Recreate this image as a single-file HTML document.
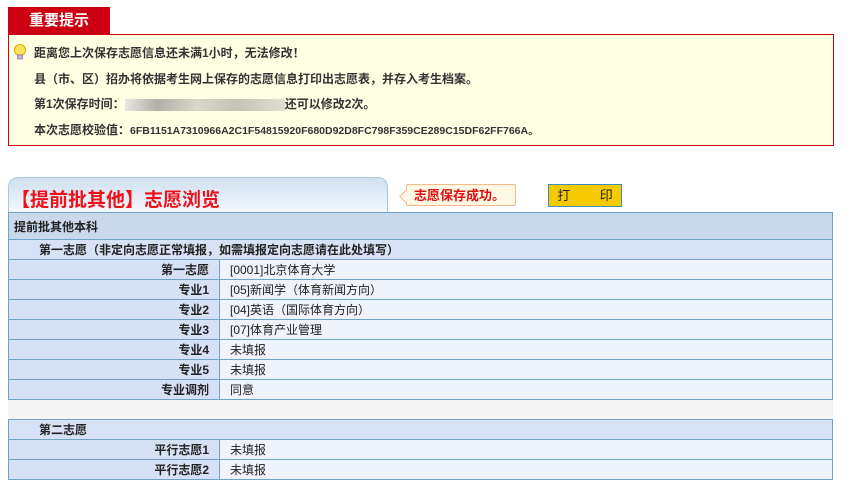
<!DOCTYPE html>
<html><head><meta charset="utf-8"><style>
body{margin:0;width:850px;height:476px;overflow:hidden;background:#fff;font-family:"Liberation Sans","Noto Sans CJK SC",sans-serif;font-size:12px;color:#222;position:relative}
.a{position:absolute}
.tab{left:8px;top:7px;width:102px;height:27px;background:#cc0012;color:#fff;font-weight:bold;font-size:15px;line-height:27px;text-align:center}
.box{left:8px;top:34px;width:824px;height:110px;border:1px solid #cc0012;background:#ffffe3}
.box div{position:absolute;left:25px;font-weight:bold;font-size:12px;color:#333}
.hdr{left:8px;top:177px;width:380px;height:35px;border:1px solid #a9c6de;border-bottom:none;border-radius:10px 10px 0 0;background:linear-gradient(#cfe0ef,#f3f8fc);box-sizing:border-box}
.hdr span{position:absolute;left:2px;top:7px;color:#f0101a;font-weight:bold;font-size:19px;white-space:nowrap}
.bub{left:406px;top:184px;width:110px;height:22px;border:1px solid #f6b98a;background:#fff8e4;border-radius:2px;color:#e01010;font-weight:bold;font-size:13px;line-height:22px;padding-left:7px;box-sizing:border-box}
.bub:before{content:"";position:absolute;left:-6px;top:7px;width:8px;height:8px;background:#fff8e4;border-left:1px solid #f6b98a;border-bottom:1px solid #f6b98a;transform:rotate(45deg)}
.btn{left:548px;top:184px;width:74px;height:23px;background:#f5cb00;border:1px solid #3d8dc1;box-sizing:border-box;font-size:13px;line-height:21px;text-align:center;word-spacing:26px}
table{position:absolute;left:8px;border-collapse:collapse;width:825px}
td{border:1px solid #6fa2c7;height:19px;padding:0;font-size:12px}
td.l{width:211px;background:#d6e1f5;text-align:right;font-weight:bold;padding-right:10px;box-sizing:border-box}
td.v{background:#eef3fc;padding-left:10px}
.sec{background:#d8e2f6;font-weight:bold;padding-left:30px}
</style></head><body>
<div class="a tab">重要提示</div>
<div class="a box">
<svg style="position:absolute;left:4px;top:9px" width="14" height="17" viewBox="0 0 14 17"><circle cx="7" cy="6" r="5.5" fill="#ffe060" stroke="#e0a800"/><rect x="4.5" y="11" width="5" height="4" fill="#c8b0e0" stroke="#8a70a8" stroke-width=".7"/></svg>
<div style="top:9px">距离您上次保存志愿信息还未满1小时，无法修改！</div>
<div style="top:35px">县（市、区）招办将依据考生网上保存的志愿信息打印出志愿表，并存入考生档案。</div>
<div style="top:60px">第1次保存时间：<span style="display:inline-block;width:160px;height:12px;background:linear-gradient(90deg,#e8e8e0,#b0b0a4 20%,#d8d8c8 45%,#c4c4b4 70%,#e0e0d0);vertical-align:middle"></span>还可以修改2次。</div>
<div style="top:86px">本次志愿校验值：<span style="font-size:10.5px">6FB1151A7310966A2C1F54815920F680D92D8FC798F359CE289C15DF62FF766A。</span></div>
</div>
<div class="a hdr"><span>【提前批其他】志愿浏览</span></div>
<div class="a bub">志愿保存成功。</div>
<div class="a btn">打 印</div>
<table style="top:212px">
<tr><td colspan="2" style="height:26px;background:#c9d8ea;font-weight:bold;padding-left:5px">提前批其他本科</td></tr>
<tr><td colspan="2" class="sec">第一志愿（非定向志愿正常填报，如需填报定向志愿请在此处填写）</td></tr>
<tr><td class="l">第一志愿</td><td class="v">[0001]北京体育大学</td></tr>
<tr><td class="l">专业1</td><td class="v">[05]新闻学（体育新闻方向）</td></tr>
<tr><td class="l">专业2</td><td class="v">[04]英语（国际体育方向）</td></tr>
<tr><td class="l">专业3</td><td class="v">[07]体育产业管理</td></tr>
<tr><td class="l">专业4</td><td class="v">未填报</td></tr>
<tr><td class="l">专业5</td><td class="v">未填报</td></tr>
<tr><td class="l">专业调剂</td><td class="v">同意</td></tr>
</table>
<div class="a" style="left:8px;top:400px;width:825px;height:19px;background:#f5f5f5"></div>
<table style="top:419px">
<tr><td colspan="2" class="sec">第二志愿</td></tr>
<tr><td class="l">平行志愿1</td><td class="v">未填报</td></tr>
<tr><td class="l">平行志愿2</td><td class="v">未填报</td></tr>
</table>
</body></html>
